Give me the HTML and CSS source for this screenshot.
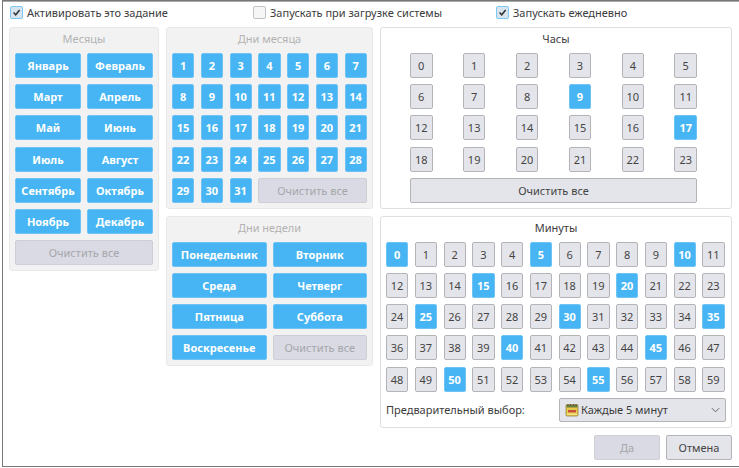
FILE: index.html
```html
<!DOCTYPE html>
<html lang="ru">
<head>
<meta charset="utf-8">
<title>Задание</title>
<link rel="stylesheet" href="styles.css">
</head>
<body>
<div class="window">
  <div class="top">
    <label class="check"><span class="box on"><svg viewBox="0 0 13 13" class="tick"><path d="M3 6.5 5.6 9.2 10.2 3.6"/></svg></span>Активировать это задание</label>
    <label class="check"><span class="box"></span>Запускать при загрузке системы</label>
    <label class="check"><span class="box on"><svg viewBox="0 0 13 13" class="tick"><path d="M3 6.5 5.6 9.2 10.2 3.6"/></svg></span>Запускать ежедневно</label>
  </div>
  <div class="main">
    <section class="panel off months">
      <div class="title">Месяцы</div>
      <div class="grid g2">
        <button class="b sel">Январь</button><button class="b sel">Февраль</button>
        <button class="b sel">Март</button><button class="b sel">Апрель</button>
        <button class="b sel">Май</button><button class="b sel">Июнь</button>
        <button class="b sel">Июль</button><button class="b sel">Август</button>
        <button class="b sel">Сентябрь</button><button class="b sel">Октябрь</button>
        <button class="b sel">Ноябрь</button><button class="b sel">Декабрь</button>
        <button class="b dis span2">Очистить все</button>
      </div>
    </section>
    <div class="col middle">
      <section class="panel off">
        <div class="title">Дни месяца</div>
        <div class="grid g7">
          <button class="b sel">1</button><button class="b sel">2</button><button class="b sel">3</button><button class="b sel">4</button><button class="b sel">5</button><button class="b sel">6</button><button class="b sel">7</button>
          <button class="b sel">8</button><button class="b sel">9</button><button class="b sel">10</button><button class="b sel">11</button><button class="b sel">12</button><button class="b sel">13</button><button class="b sel">14</button>
          <button class="b sel">15</button><button class="b sel">16</button><button class="b sel">17</button><button class="b sel">18</button><button class="b sel">19</button><button class="b sel">20</button><button class="b sel">21</button>
          <button class="b sel">22</button><button class="b sel">23</button><button class="b sel">24</button><button class="b sel">25</button><button class="b sel">26</button><button class="b sel">27</button><button class="b sel">28</button>
          <button class="b sel">29</button><button class="b sel">30</button><button class="b sel">31</button><button class="b dis span4">Очистить все</button>
        </div>
      </section>
      <section class="panel off">
        <div class="title">Дни недели</div>
        <div class="grid g2b">
          <button class="b sel">Понедельник</button><button class="b sel">Вторник</button>
          <button class="b sel">Среда</button><button class="b sel">Четверг</button>
          <button class="b sel">Пятница</button><button class="b sel">Суббота</button>
          <button class="b sel">Воскресенье</button><button class="b dis">Очистить все</button>
        </div>
      </section>
    </div>
    <div class="col right">
      <section class="panel">
        <div class="title">Часы</div>
        <div class="grid g6">
          <button class="b">0</button><button class="b">1</button><button class="b">2</button><button class="b">3</button><button class="b">4</button><button class="b">5</button>
          <button class="b">6</button><button class="b">7</button><button class="b">8</button><button class="b sel">9</button><button class="b">10</button><button class="b">11</button>
          <button class="b">12</button><button class="b">13</button><button class="b">14</button><button class="b">15</button><button class="b">16</button><button class="b sel">17</button>
          <button class="b">18</button><button class="b">19</button><button class="b">20</button><button class="b">21</button><button class="b">22</button><button class="b">23</button>
          <button class="b span6">Очистить все</button>
        </div>
      </section>
      <section class="panel">
        <div class="title">Минуты</div>
        <div class="grid g12">
          <button class="b sel">0</button><button class="b">1</button><button class="b">2</button><button class="b">3</button><button class="b">4</button><button class="b sel">5</button><button class="b">6</button><button class="b">7</button><button class="b">8</button><button class="b">9</button><button class="b sel">10</button><button class="b">11</button>
          <button class="b">12</button><button class="b">13</button><button class="b">14</button><button class="b sel">15</button><button class="b">16</button><button class="b">17</button><button class="b">18</button><button class="b">19</button><button class="b sel">20</button><button class="b">21</button><button class="b">22</button><button class="b">23</button>
          <button class="b">24</button><button class="b sel">25</button><button class="b">26</button><button class="b">27</button><button class="b">28</button><button class="b">29</button><button class="b sel">30</button><button class="b">31</button><button class="b">32</button><button class="b">33</button><button class="b">34</button><button class="b sel">35</button>
          <button class="b">36</button><button class="b">37</button><button class="b">38</button><button class="b">39</button><button class="b sel">40</button><button class="b">41</button><button class="b">42</button><button class="b">43</button><button class="b">44</button><button class="b sel">45</button><button class="b">46</button><button class="b">47</button>
          <button class="b">48</button><button class="b">49</button><button class="b sel">50</button><button class="b">51</button><button class="b">52</button><button class="b">53</button><button class="b">54</button><button class="b sel">55</button><button class="b">56</button><button class="b">57</button><button class="b">58</button><button class="b">59</button>
        </div>
        <div class="preset">
          <span>Предварительный выбор:</span>
          <div class="combo">
            <svg class="cal" viewBox="0 0 14 14"><rect x="1" y="1.5" width="12" height="11.5" rx="1" fill="#e8c84a" stroke="#8a7a3a" stroke-width=".7"/><rect x="1.5" y="2" width="11" height="2.5" fill="#6d7f3c"/><path d="M3 1v2M5.5 1v2M8.5 1v2M11 1v2" stroke="#555" stroke-width=".9"/><rect x="3" y="7" width="8" height="2.4" fill="#c8503a"/><rect x="2" y="10.5" width="10" height="1.5" fill="#f4e28a"/></svg>
            <span class="combo-text">Каждые 5 минут</span>
            <svg class="chev" viewBox="0 0 10 6"><path d="M1 1l4 4 4-4"/></svg>
          </div>
        </div>
      </section>
    </div>
  </div>
  <div class="footer">
    <button class="b dis foot ok">Да</button>
    <button class="b foot">Отмена</button>
  </div>
</div>
</body>
</html>
```
FILE: styles.css
```css
* { box-sizing: border-box; }
html, body { margin: 0; background: #fff; }
body { width: 739px; height: 468px; overflow: hidden; font: 11px "Noto Sans", sans-serif; color: #3c3c3c; }
.window { margin-left: 2px; height: 467px; border: 1px solid #777; border-width: 1px 0 1px 1px; box-shadow: inset 0 1px 0 #aaa; padding: 0 7px 0 6px; background: #fff; }
.top { display: grid; grid-template-columns: 243px 243px 1fr; height: 26px; padding: 5px 0 0 1px; }
.check { display: flex; align-items: flex-start; gap: 4px; line-height: 14px; }
.box { width: 13px; height: 13px; border: 1px solid #c4c4c4; border-radius: 2px; background: #f6f6f6; flex: none; }
.box.on { border-color: #7cc8f5; background: #d9e5ee; margin-right: 0; }
.check .box { margin-right: 0; }
.tick { display: block; width: 11px; height: 11px; fill: none; stroke: #333; stroke-width: 1.8; }
.main { display: flex; gap: 7px; align-items: flex-start; }
.col { display: flex; flex-direction: column; gap: 7px; }
.months { width: 150px; }
.middle { width: 207px; }
.right { width: 352px; }
.panel { border: 1px solid #dfdfdf; border-radius: 3px; padding: 0 5px 5px; }
.panel.off { background: #f2f2f2; border-color: #e8e8e8; }
.title { height: 25px; line-height: 22px; text-align: center; }
.off .title { color: #b2b2b2; }
.grid { display: grid; gap: 6.2px 6px; grid-auto-rows: 25px; }
.g2 { grid-template-columns: 66px 66px; }
.g2b { grid-template-columns: 94.5px 94.5px; }
.g7 { grid-template-columns: repeat(7, 22.25px); column-gap: 6.5px; }
.g6 { grid-template-columns: repeat(6, 22.5px); justify-content: space-between; width: 287px; margin-left: 24px; }
.g12 { grid-template-columns: repeat(12, 22.25px); column-gap: 6.5px; }
.span2 { grid-column: span 2; }
.span4 { grid-column: span 4; }
.span6 { grid-column: span 6; }
.b { font: inherit; color: #444; padding: 0; background: #e4e5ea; border: 1px solid #b4b4b8; border-radius: 2px; white-space: nowrap; }
.b.sel { background: #47b5f3; border-color: #6fc3f4; color: #fff; font-weight: 700; }
.b.dis { background: #d9dae3; border-color: #cdced6; color: #a6a7ab; }
.preset { display: flex; align-items: center; justify-content: space-between; margin-top: 6.2px; height: 24px; }
.combo { width: 167px; height: 24px; display: flex; align-items: center; gap: 2px; padding: 0 5px; background: #e4e5ea; border: 1px solid #b4b4b8; border-radius: 2px; }
.cal { width: 14px; height: 14px; flex: none; }
.combo-text { flex: 1; }
.chev { width: 9px; height: 6px; fill: none; stroke: #555; stroke-width: 1; }
.footer { display: flex; justify-content: flex-end; gap: 6px; margin-top: 7px; }
.foot { width: 66px; height: 25px; }
.ok { background: #dde0e8; border-color: #dde0e8; }
```
